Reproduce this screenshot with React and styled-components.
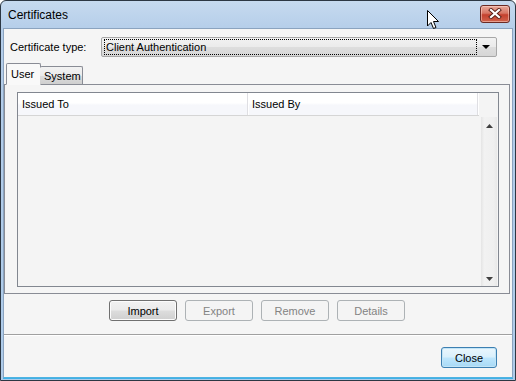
import React from 'react'
import styled, { createGlobalStyle, css } from 'styled-components'

const Global = createGlobalStyle`
  html, body {
    margin: 0;
    padding: 0;
    background: #ffffff;
  }
  body {
    font-family: 'Liberation Sans', Arial, sans-serif;
    font-size: 11px;
    color: #000;
  }
`

const Window = styled.div`
  position: relative;
  width: 516px;
  height: 381px;
  box-sizing: border-box;
  border: 1px solid #2c3743;
  border-radius: 6px 6px 0 0;
  background: linear-gradient(to bottom, #c6daef 0%, #b4cde9 30px, #aecbe9 100%);
  display: flex;
  flex-direction: column;
  padding: 0 2px 2px 2px;
  overflow: hidden;
`

const TitleBar = styled.div`
  height: 27px;
  display: flex;
  align-items: center;
  justify-content: space-between;
  padding: 0 3px 0 5px;
  font-size: 12px;
  color: #000;
`

const CloseX = styled.div`
  width: 28px;
  height: 16px;
  margin-top: -2px;
  border: 1px solid #6b2a24;
  border-radius: 3px;
  background: linear-gradient(to bottom, #e9a99b 0%, #d77563 45%, #c4412e 55%, #d0624c 100%);
  box-shadow: inset 0 0 0 1px rgba(255, 220, 210, 0.5);
  display: flex;
  align-items: center;
  justify-content: center;
`

const Cursor = styled.svg`
  position: absolute;
  left: 426px;
  top: 9px;
`

const Client = styled.div`
  flex: 1;
  background: #f5f5f5;
  border: 1px solid #8ba3bf;
  border-bottom-color: #4fb3e2;
  box-shadow: 0 1px 0 #3fb0e6;
  display: flex;
  flex-direction: column;
  padding-top: 8px;
`

const TypeRow = styled.div`
  display: flex;
  align-items: center;
  padding-left: 6px;
`

const Label = styled.span`
  width: 91px;
`

const Combo = styled.div`
  width: 390px;
  height: 16px;
  border: 1px solid #a7a7a7;
  border-radius: 2px;
  background: linear-gradient(to bottom, #f2f2f2 0%, #ebebeb 48%, #dddddd 52%, #d6d6d6 100%);
  display: flex;
  align-items: center;
  padding: 1px 2px;
  box-sizing: content-box;
`

const ComboText = styled.div`
  flex: 1;
  height: 14px;
  border: 1px dotted #000;
  padding-left: 1px;
  line-height: 14px;
`

const ComboArrow = styled.div`
  width: 17px;
  display: flex;
  justify-content: center;
`

const TabStrip = styled.div`
  display: flex;
  align-items: flex-end;
  margin: 6px 0 0 2px;
  height: 22px;
  position: relative;
  z-index: 1;
`

const Tab = styled.div`
  box-sizing: border-box;
  border: 1px solid #898c95;
  border-radius: 2px 2px 0 0;
  padding: 0 4px;
  display: flex;
  align-items: center;
  ${({ $active }) =>
    $active
      ? css`
          height: 22px;
          width: 35px;
          background: #f9f9f9;
          border-bottom-color: #f9f9f9;
        `
      : css`
          height: 18px;
          width: 43px;
          margin-bottom: 1px;
          margin-left: -1px;
          border-left: none;
          border-bottom: none;
          background: linear-gradient(to bottom, #f2f2f2 0%, #ebebeb 50%, #dddddd 51%, #cfcfcf 100%);
        `}
`

const Panel = styled.div`
  margin: -1px 2px 0 0;
  height: 210px;
  box-sizing: border-box;
  border: 1px solid #898c95;
  background: #f5f5f5;
  padding: 7px 10px 6px 12px;
`

const List = styled.div`
  height: 195px;
  box-sizing: border-box;
  border: 1px solid #828790;
  display: grid;
  grid-template-columns: 1fr 17px;
  grid-template-rows: 23px 1fr;
  background: #f4f4f4;
`

const Header = styled.div`
  display: flex;
  border-bottom: 1px solid #d5d5d5;
  background: linear-gradient(to bottom, #ffffff 0%, #ffffff 45%, #f6f7fb 55%, #f6f7fb 100%);
  margin-right: 2px;
`

const HeaderCell = styled.div`
  width: ${({ $w }) => $w};
  box-sizing: border-box;
  padding-left: 4px;
  display: flex;
  align-items: center;
  border-right: 1px solid #dfdfe3;
  box-shadow: 1px 0 0 #ffffff;
`

const HeaderFill = styled.div`
  grid-column: 2;
  grid-row: 1;
`

const Body = styled.div`
  grid-column: 1;
  grid-row: 2;
`

const Scroll = styled.div`
  grid-column: 2;
  grid-row: 2;
  margin: 1px 1px 0 0;
  background: linear-gradient(to right, #e4e4e4 0%, #f2f2f2 20%, #efefef 80%, #e8e8e8 100%);
  display: flex;
  flex-direction: column;
  justify-content: space-between;
  align-items: center;
  padding: 7px 0 5px;
`

const ButtonRow = styled.div`
  display: flex;
  justify-content: center;
  gap: 8px;
  margin-top: 6px;
  padding-right: 2px;
`

const Button = styled.div`
  width: ${({ $w }) => $w || '68px'};
  height: 21px;
  box-sizing: border-box;
  border-radius: 3px;
  display: flex;
  align-items: center;
  justify-content: center;
  border: 1px solid #707070;
  background: linear-gradient(to bottom, #f2f2f2 0%, #ebebeb 48%, #dddddd 52%, #cfcfcf 100%);
  box-shadow: inset 0 0 0 1px #fcfcfc;
  color: #000;
  ${({ $disabled }) =>
    $disabled &&
    css`
      border-color: #adb2b5;
      background: #f4f4f4;
      box-shadow: none;
      color: #838383;
    `}
  ${({ $default }) =>
    $default &&
    css`
      border-color: #3c7fb1;
      background: linear-gradient(to bottom, #eaf6fd 0%, #d9f0fc 48%, #bee6fd 52%, #a7d9f5 100%);
      box-shadow: inset 0 0 0 1px #c2e4f6;
    `}
`

const Separator = styled.div`
  margin-top: 13px;
  border-top: 1px solid #a0a0a0;
  border-bottom: 1px solid #ffffff;
`

const Footer = styled.div`
  display: flex;
  justify-content: flex-end;
  padding: 11px 15px 0 0;
`

const Triangle = ({ up }) => (
  <svg width="7" height="4" viewBox="0 0 7 4">
    <path d={up ? 'M0 4 L3.5 0 L7 4 Z' : 'M0 0 L3.5 4 L7 0 Z'} fill="#404040" />
  </svg>
)

export default function App() {
  return (
    <>
      <Global />
      <Window>
        <TitleBar>
          <span>Certificates</span>
          <CloseX>
            <svg width="14" height="11" viewBox="0 0 14 11">
              <path d="M3 2 L11 9 M11 2 L3 9" stroke="#5a1f18" strokeWidth="4" strokeLinecap="square" />
              <path d="M3 2 L11 9 M11 2 L3 9" stroke="#ffffff" strokeWidth="2.2" strokeLinecap="square" />
            </svg>
          </CloseX>
        </TitleBar>
        <Cursor width="13" height="20" viewBox="0 0 13 20">
          <path d="M0.5 0.5 L0.5 16 L4 12.5 L6.5 18.5 L9 17.5 L6.5 11.5 L11.5 11.5 Z" fill="#ffffff" stroke="#000000" strokeWidth="1" strokeLinejoin="miter" />
        </Cursor>
        <Client>
          <TypeRow>
            <Label>Certificate type:</Label>
            <Combo>
              <ComboText>Client Authentication</ComboText>
              <ComboArrow>
                <svg width="8" height="4" viewBox="0 0 8 4">
                  <path d="M0 0 L8 0 L4 4 Z" fill="#000" />
                </svg>
              </ComboArrow>
            </Combo>
          </TypeRow>

          <TabStrip>
            <Tab $active>User</Tab>
            <Tab>System</Tab>
          </TabStrip>

          <Panel>
            <List>
              <Header>
                <HeaderCell $w="230px">Issued To</HeaderCell>
                <HeaderCell $w="230px">Issued By</HeaderCell>
              </Header>
              <HeaderFill />
              <Body />
              <Scroll>
                <Triangle up />
                <Triangle />
              </Scroll>
            </List>
          </Panel>

          <ButtonRow>
            <Button>Import</Button>
            <Button $disabled>Export</Button>
            <Button $disabled>Remove</Button>
            <Button $disabled>Details</Button>
          </ButtonRow>

          <Separator />

          <Footer>
            <Button $default $w="56px">Close</Button>
          </Footer>
        </Client>
      </Window>
    </>
  )
}
